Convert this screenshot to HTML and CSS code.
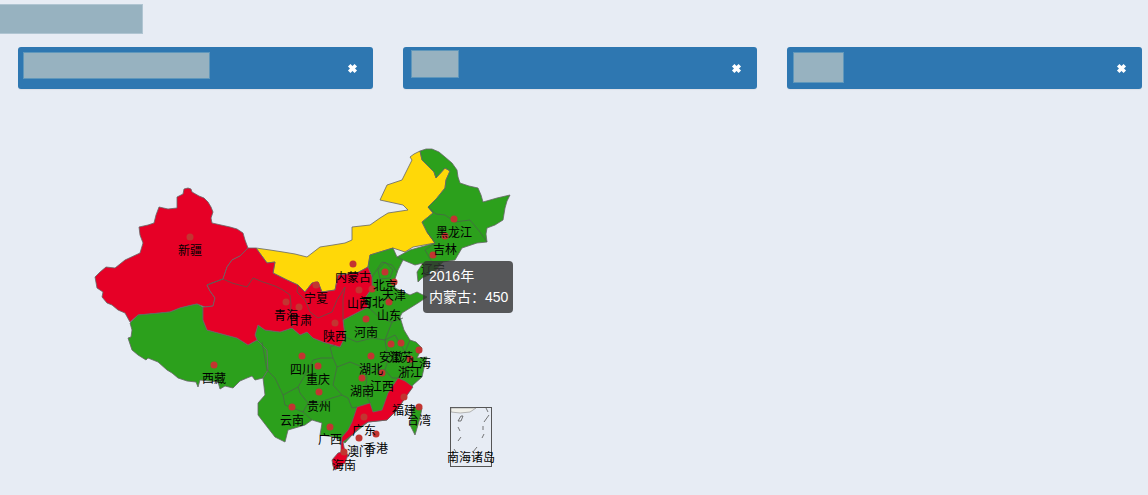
FILE: index.html
```html
<!DOCTYPE html>
<html lang="zh">
<head>
<meta charset="utf-8">
<title>地图</title>
<link rel="stylesheet" href="styles.css">
</head>
<body>
<div class="title-mask"></div>
<section class="bars">
  <div class="bar">
    <div class="mask mask-a"></div>
    <svg class="close" viewBox="0 0 10 10"><path d="M2 2L8 8M8 2L2 8"/></svg>
  </div>
  <div class="bar">
    <div class="mask mask-b"></div>
    <svg class="close" viewBox="0 0 10 10"><path d="M2 2L8 8M8 2L2 8"/></svg>
  </div>
  <div class="bar">
    <div class="mask mask-c"></div>
    <svg class="close" viewBox="0 0 10 10"><path d="M2 2L8 8M8 2L2 8"/></svg>
  </div>
</section>
<section class="map">
  <svg class="china" viewBox="90 140 430 340" width="430" height="340">
    <g class="land">
      <polygon class="red" points="184,189 188,188 191,189 192,192 199,196 204,198 208,202 211,207 213,212 211,218 212,223 221,225 230,227 237,229 243,233 245,240 248,248 240,256 232,260 227,267 225,273 223,279 207,285 210,291 215,298 213,306 205,307 197,304 188,306 180,308 170,312 160,313 149,314 138,315 130,322 125,313 118,310 112,305 107,303 102,297 103,292 97,288 95,277 100,272 106,267 115,268 125,260 140,253 143,243 140,235 139,227 148,225 154,223 156,215 159,207 168,209 177,208 177,197 183,194"/>
      <polygon class="green" points="130,323 138,315 149,314 160,313 170,312 180,308 188,306 197,304 203,307 203,320 207,330 222,334 237,338 248,345 257,340 267,350 268,370 263,378 255,380 252,376 247,378 240,381 233,388 225,386 220,389 218,382 209,381 200,380 198,387 196,382 187,381 178,378 172,373 167,370 158,362 148,358 146,360 138,355 132,350 128,338 131,337 132,330"/>
      <polygon class="yellow" points="256,248 270,250 283,252 295,254 307,257 320,247 333,245 345,243 352,240 352,227 361,226 370,225 380,218 388,213 408,210 403,205 380,200 387,185 402,180 408,168 412,160 410,157 414,154 420,151 422,160 428,166 434,172 436,178 445,168 450,171 446,180 445,188 437,198 428,207 433,213 422,222 427,232 435,243 413,247 405,252 393,248 370,255 368,267 357,273 338,275 335,290 322,292 318,282 312,283 305,292 298,285 287,280 273,273 275,262 267,263"/>
      <polygon class="green" points="420,151 426,149 432,149 439,152 445,157 452,163 457,170 458,177 460,183 469,186 478,188 481,195 483,202 497,198 510,195 507,201 505,208 504,214 503,220 495,225 487,228 486,234 487,242 477,243 462,248 455,260 443,262 433,273 422,278 418,282 417,272 423,263 415,265 403,260 398,270 394,282 395,288 403,292 410,295 417,292 427,297 418,303 410,308 402,313 400,317 404,330 410,340 416,342 422,348 417,358 427,357 424,368 422,377 413,385 405,398 397,410 387,420 368,422 352,435 345,443 335,437 320,435 322,423 312,420 305,425 288,430 285,442 275,437 268,428 258,415 258,403 265,395 263,378 268,370 267,350 257,340 255,335 258,325 265,330 280,332 292,328 300,335 307,332 313,338 323,342 340,347 345,337 343,320 368,307 365,298 372,288 372,277 368,267 370,255 393,248 397,257 410,250 435,243 427,232 422,222 433,213 428,207 437,198 445,188 446,180 450,171 445,168 436,178 434,172 428,166 422,160"/>
      <polygon class="red" points="256,248 267,263 275,262 273,273 287,280 298,285 305,292 312,283 318,282 322,292 335,290 338,275 357,273 368,267 372,277 372,288 365,298 368,307 343,320 345,337 340,347 323,342 313,338 307,332 300,335 292,328 280,332 265,330 258,325 255,335 257,340 248,345 237,338 222,334 207,330 203,320 203,307 205,307 213,306 215,298 210,291 207,285 223,279 225,273 227,267 232,260 240,256 248,248"/>
      <polygon class="red" points="398,378 405,381 413,387 405,398 397,410 387,420 378,421 368,422 360,427 352,435 343,442 345,452 341,452 341,444 342,437 348,430 352,422 357,407 370,403 373,412 382,410 388,393"/>
      <polygon class="red" points="338,453 345,451 348,455 345,463 335,470 333,466 332,460"/>
      <polygon class="green" points="413,407 422,408 420,418 415,435 410,425"/>
    </g>
    <g class="borders">
      <polyline points="207,285 223,279 232,283 247,287 253,278 263,282 275,286 283,290 290,295 291,305 290,315 293,327"/>
      <polyline points="298,285 297,292 305,300 310,312 318,318 332,312 337,300 345,287"/>
      <polyline points="345,287 343,300 343,320"/>
      <polyline points="262,342 267,370 275,378 283,395 298,387 305,375 313,360 321,358 333,358 330,347 335,345"/>
      <polyline points="298,387 300,393 308,403 320,402 332,398 342,395 348,398 352,408 357,407"/>
      <polyline points="308,403 303,412 312,420"/>
      <polyline points="283,395 285,405 303,412"/>
      <polyline points="333,358 337,367 333,385 342,395"/>
      <polyline points="337,367 350,362 365,368 385,370 388,360 385,340 392,322 403,318"/>
      <polyline points="345,337 357,342 372,338 385,340"/>
      <polyline points="365,368 367,378 365,392 370,403"/>
      <polyline points="385,370 392,378 398,378 405,370 412,362 405,352 410,340"/>
      <polyline points="385,340 395,335 405,352"/>
      <polyline points="368,307 380,318 392,322"/>
      <polyline points="372,277 378,268 382,262 392,265 397,272"/>
      <polyline points="403,260 397,257"/>
      <polyline points="428,207 436,214 445,215 455,222 470,220 480,232 487,242"/>
      <polyline points="427,232 435,243 425,250 432,262 443,262"/>
      <polyline points="378,270 385,262 393,270 390,278 380,279 378,270"/>
    </g>
    <g class="dots">
      <circle cx="190" cy="237" r="3"/><circle cx="214" cy="365" r="3"/><circle cx="286" cy="302" r="3"/>
      <circle cx="299" cy="307" r="3"/><circle cx="316" cy="285" r="3"/><circle cx="353" cy="264" r="3"/>
      <circle cx="454" cy="219" r="3"/><circle cx="445" cy="236" r="3"/><circle cx="433" cy="255" r="3"/>
      <circle cx="385" cy="272" r="3"/><circle cx="394" cy="282" r="3"/><circle cx="372" cy="289" r="3"/>
      <circle cx="359" cy="290" r="3"/><circle cx="389" cy="302" r="3"/><circle cx="366" cy="319" r="3"/>
      <circle cx="335" cy="323" r="3"/><circle cx="302" cy="356" r="3"/><circle cx="318" cy="366" r="3"/>
      <circle cx="319" cy="392" r="3"/><circle cx="292" cy="407" r="3"/><circle cx="330" cy="427" r="3"/>
      <circle cx="364" cy="417" r="3"/><circle cx="362" cy="378" r="3"/><circle cx="371" cy="356" r="3"/>
      <circle cx="382" cy="373" r="3"/><circle cx="391" cy="344" r="3"/><circle cx="401" cy="343" r="3"/>
      <circle cx="419" cy="350" r="3"/><circle cx="410" cy="359" r="3"/><circle cx="404" cy="397" r="3"/>
      <circle cx="419" cy="407" r="3"/><circle cx="376" cy="434" r="3"/><circle cx="359" cy="438" r="3"/>
      <circle cx="344" cy="452" r="3"/>
    </g>
    <g class="islands">
      <rect class="box" x="450.500" y="407.500" width="41" height="59"/>
      <path class="sea" d="M451 408H476L470 412Q460 414 451 412Z"/>
      <path class="dash" d="M458 421L461 416H463L461 421ZM458 427L460 431M458 441L461 437M486 408L488 412M489 415L484 422M483 426V430M482 438L484 434M477 447L473 452M454 449L456 452"/>
    </g>
    <g class="labels">
      <text x="190" y="255">新疆</text><text x="214" y="383">西藏</text><text x="286" y="320">青海</text>
      <text x="300" y="325">甘肃</text><text x="316" y="303">宁夏</text><text x="353" y="282">内蒙古</text>
      <text x="454" y="237">黑龙江</text><text x="445" y="254">吉林</text><text x="433" y="274">辽宁</text>
      <text x="385" y="290">北京</text><text x="394" y="300">天津</text><text x="372" y="307">河北</text>
      <text x="359" y="308">山西</text><text x="389" y="320">山东</text><text x="366" y="337">河南</text>
      <text x="335" y="341">陕西</text><text x="302" y="374">四川</text><text x="318" y="384">重庆</text>
      <text x="319" y="411">贵州</text><text x="292" y="425">云南</text><text x="330" y="444">广西</text>
      <text x="364" y="435">广东</text><text x="362" y="396">湖南</text><text x="371" y="374">湖北</text>
      <text x="382" y="391">江西</text><text x="391" y="362">安徽</text><text x="401" y="362">江苏</text>
      <text x="419" y="368">上海</text><text x="410" y="377">浙江</text><text x="404" y="415">福建</text>
      <text x="419" y="425">台湾</text><text x="376" y="453">香港</text><text x="359" y="456">澳门</text>
      <text x="344" y="470">海南</text><text x="471" y="462">南海诸岛</text>
    </g>
  </svg>
  <div class="tooltip">2016年<br>内蒙古：450</div>
</section>
</body>
</html>
```
FILE: styles.css
```css
html, body {
  margin: 0;
  height: 495px;
  overflow: hidden;
}
body {
  background: #e7ecf4;
  padding-top: 4px;
  box-sizing: border-box;
  font-family: "Liberation Sans", "Noto Sans CJK TC", sans-serif;
}
.title-mask {
  width: 143px;
  height: 30px;
  box-sizing: border-box;
  background: #97b2c0;
  border: 1px solid #b0c5d2;
  border-left: 0;
}
.bars {
  display: grid;
  grid-template-columns: repeat(3, 1fr);
  gap: 30px;
  margin: 13px 6px 0 18px;
}
.bar {
  display: flex;
  align-items: flex-start;
  height: 42px;
  box-sizing: border-box;
  padding-right: 15px;
  background: #2e77b1;
  border-radius: 3px;
  box-shadow: 0 1px 1px rgba(0, 0, 0, .05);
}
.mask {
  box-sizing: border-box;
  background: #97b2c0;
  border: 1px solid #5f97bb;
}
.mask-a { width: 187px; height: 27px; margin: 5px 0 0 5px; }
.mask-b { width: 48px; height: 28px; margin: 3px 0 0 8px; }
.mask-c { width: 51px; height: 31px; margin: 5px 0 0 6px; }
.close {
  width: 11px;
  height: 11px;
  margin-left: auto;
  align-self: center;
  fill: none;
  stroke: #fff;
  stroke-width: 3.200;
}
.map {
  position: relative;
  width: 430px;
  height: 340px;
  margin: 51px 0 0 90px;
}
.china {
  display: block;
}
.land polygon {
  stroke: #666;
  stroke-width: .8;
  stroke-linejoin: round;
}
.red { fill: #e60026; }
.green { fill: #2ca01c; }
.yellow { fill: #ffd808; }
.borders polyline {
  fill: none;
  stroke: #4c5f4c;
  stroke-width: .7;
  stroke-linejoin: round;
}
.dots circle {
  fill: #c23531;
  r: 3.500px;
}
.box {
  fill: none;
  stroke: #555;
  stroke-width: 1;
}
.sea {
  fill: #f0f0ea;
  stroke: #777;
  stroke-width: .5;
}
.dash {
  fill: none;
  stroke: #555;
  stroke-width: .8;
}
.labels text {
  font-family: "Noto Sans CJK SC", sans-serif;
  font-size: 12px;
  fill: #000;
  text-anchor: middle;
}
.tooltip {
  position: absolute;
  left: 333px;
  top: 121px;
  width: 90px;
  height: 52px;
  box-sizing: border-box;
  padding: 5px 0 0 6px;
  border-radius: 4px;
  background: rgba(50, 50, 50, .8);
  color: #fff;
  font-size: 14px;
  line-height: 21px;
  white-space: nowrap;
}
```
